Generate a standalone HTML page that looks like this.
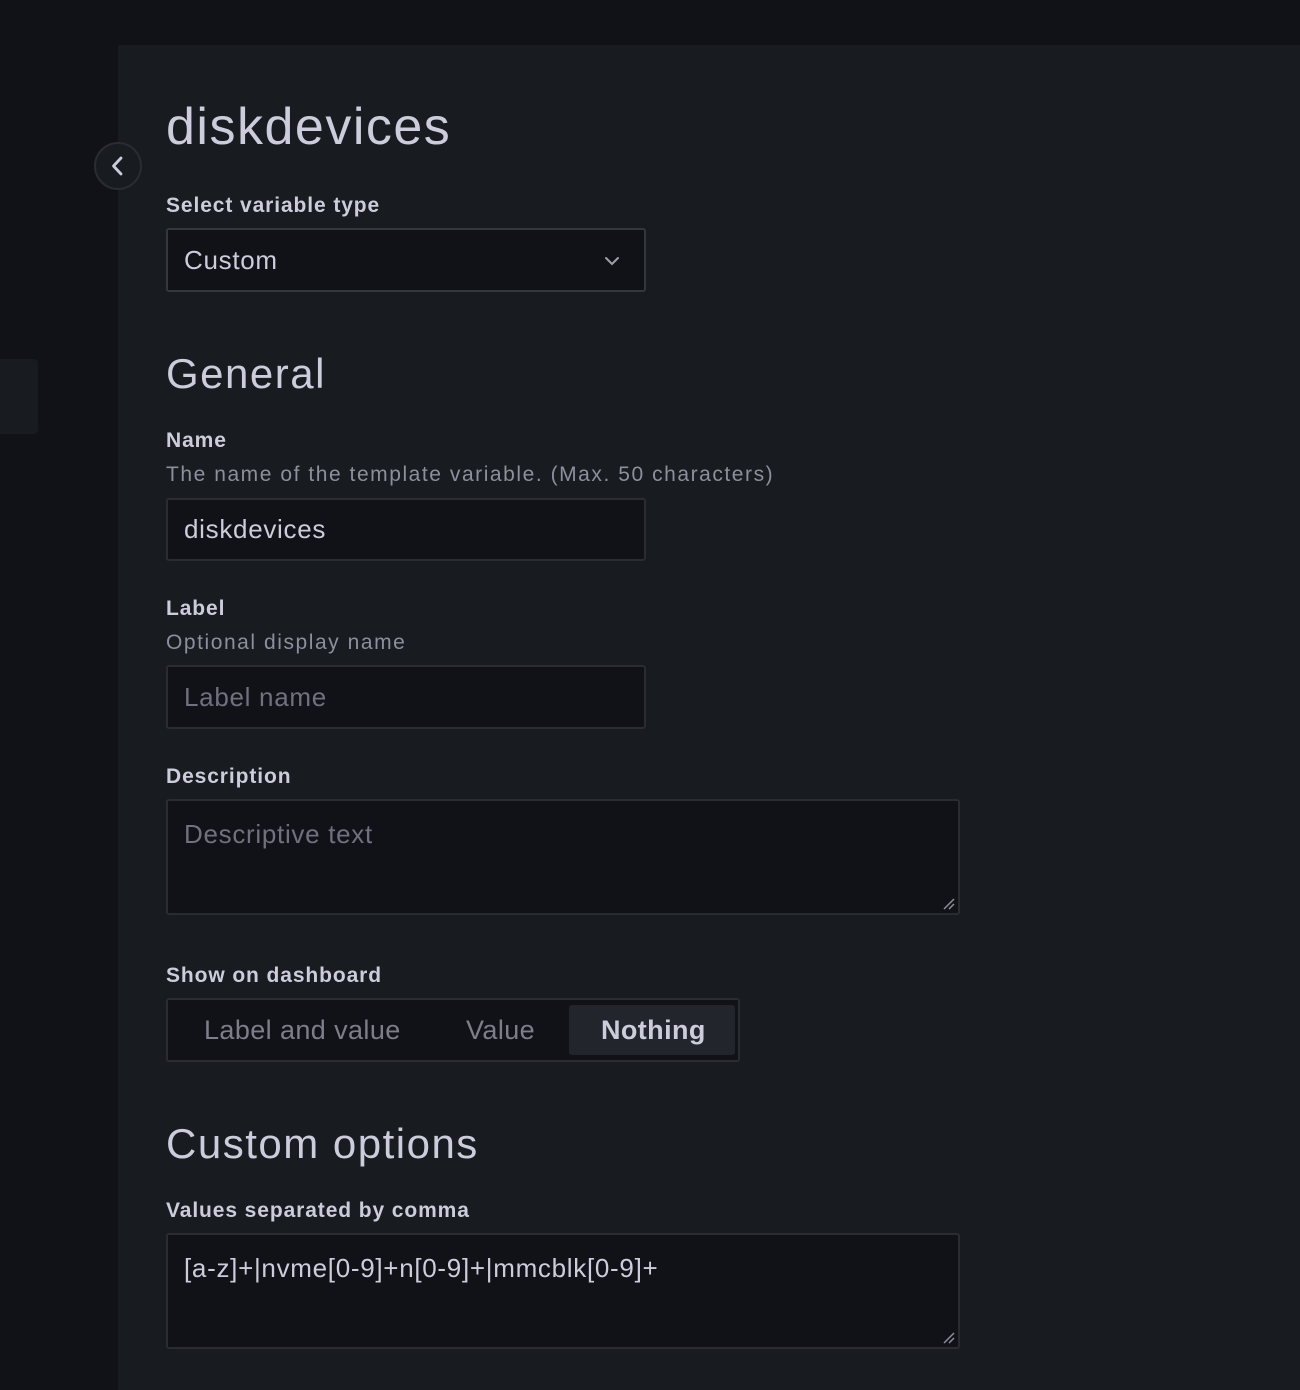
<!DOCTYPE html>
<html><head><meta charset="utf-8"><style>
*{box-sizing:border-box;margin:0;padding:0}
body{width:1300px;height:1390px;background:#111217;font-family:"Liberation Sans",Arial,sans-serif;position:relative;overflow:hidden;color:#ccccdc}
.panel{position:absolute;left:118px;top:45px;width:1182px;height:1345px;background:#181b1f}
.side{position:absolute;left:0;top:359px;width:38px;height:75px;background:#181b1f;border-radius:0 4px 4px 0}
.abs{position:absolute}
h1{position:absolute;left:166px;top:97px;font-size:52px;font-weight:400;color:#ccccdc;letter-spacing:1.5px}
h2{position:absolute;left:166px;font-size:42px;font-weight:400;color:#ccccdc;letter-spacing:1.5px}
.lbl{position:absolute;left:166px;font-size:21px;font-weight:700;color:#ccccdc;letter-spacing:0.9px}
.desc{position:absolute;left:166px;font-size:21px;color:#8e8e9e;letter-spacing:1.55px}
.inp{position:absolute;left:166px;background:#111217;border:2px solid #2a2c32;border-radius:3px;font-size:26px;color:#ccccdc;padding-left:16px;display:flex;align-items:center;letter-spacing:0.7px}
.ph{color:#6f7080}
.ta{align-items:flex-start;padding-top:18px}
.back{position:absolute;left:94px;top:142px;width:48px;height:48px;border-radius:50%;background:#181b1f;border:2px solid #2a2c32;display:flex;align-items:center;justify-content:center}
.grp{position:absolute;left:166px;top:998px;width:574px;height:64px;background:#111217;border:2px solid #2a2c32;border-radius:3px}
.grp span{position:absolute;top:0;line-height:60px;font-size:27px;color:#7d7e8c;letter-spacing:0.4px}
.sel{position:absolute;left:401px;top:5px;width:166px;height:50px;background:#22252b;border-radius:3px}
.grip{position:absolute;right:2px;bottom:2px}
</style></head><body>
<div class="panel"></div>
<div class="side"></div>
<div class="back"><svg width="22" height="24" viewBox="0 0 22 24"><path d="M14 4 L6.5 12 L14 20" stroke="#ccccdc" stroke-width="2.8" fill="none" stroke-linecap="round" stroke-linejoin="round"/></svg></div>
<h1>diskdevices</h1>
<div class="lbl" style="top:194px">Select variable type</div>
<div class="inp" style="top:228px;width:480px;height:64px;border-color:#35373e">Custom
<svg class="abs" style="left:436px;top:25px" width="16" height="12" viewBox="0 0 16 12"><path d="M2 3 L8 9 L14 3" stroke="#9fa0ad" stroke-width="2" fill="none" stroke-linecap="round"/></svg></div>
<h2 style="top:350px">General</h2>
<div class="lbl" style="top:429px">Name</div>
<div class="desc" style="top:463px">The name of the template variable. (Max. 50 characters)</div>
<div class="inp" style="top:498px;width:480px;height:63px">diskdevices</div>
<div class="lbl" style="top:597px">Label</div>
<div class="desc" style="top:631px">Optional display name</div>
<div class="inp" style="top:665px;width:480px;height:64px"><span class="ph">Label name</span></div>
<div class="lbl" style="top:765px">Description</div>
<div class="inp ta" style="top:799px;width:794px;height:116px"><span class="ph">Descriptive text</span>
<svg class="grip" width="14" height="14" viewBox="0 0 14 14"><path d="M2 12 L12 2 M7 12 L12 7" stroke="#8e8e9e" stroke-width="1.5"/></svg></div>
<div class="lbl" style="top:964px">Show on dashboard</div>
<div class="grp"><div class="sel"></div>
<span style="left:36px">Label and value</span>
<span style="left:298px">Value</span>
<span style="left:433px;color:#ccccdc;font-weight:700">Nothing</span></div>
<h2 style="top:1120px">Custom options</h2>
<div class="lbl" style="top:1199px">Values separated by comma</div>
<div class="inp ta" style="top:1233px;width:794px;height:116px">[a-z]+|nvme[0-9]+n[0-9]+|mmcblk[0-9]+
<svg class="grip" width="14" height="14" viewBox="0 0 14 14"><path d="M2 12 L12 2 M7 12 L12 7" stroke="#8e8e9e" stroke-width="1.5"/></svg></div>
</body></html>
